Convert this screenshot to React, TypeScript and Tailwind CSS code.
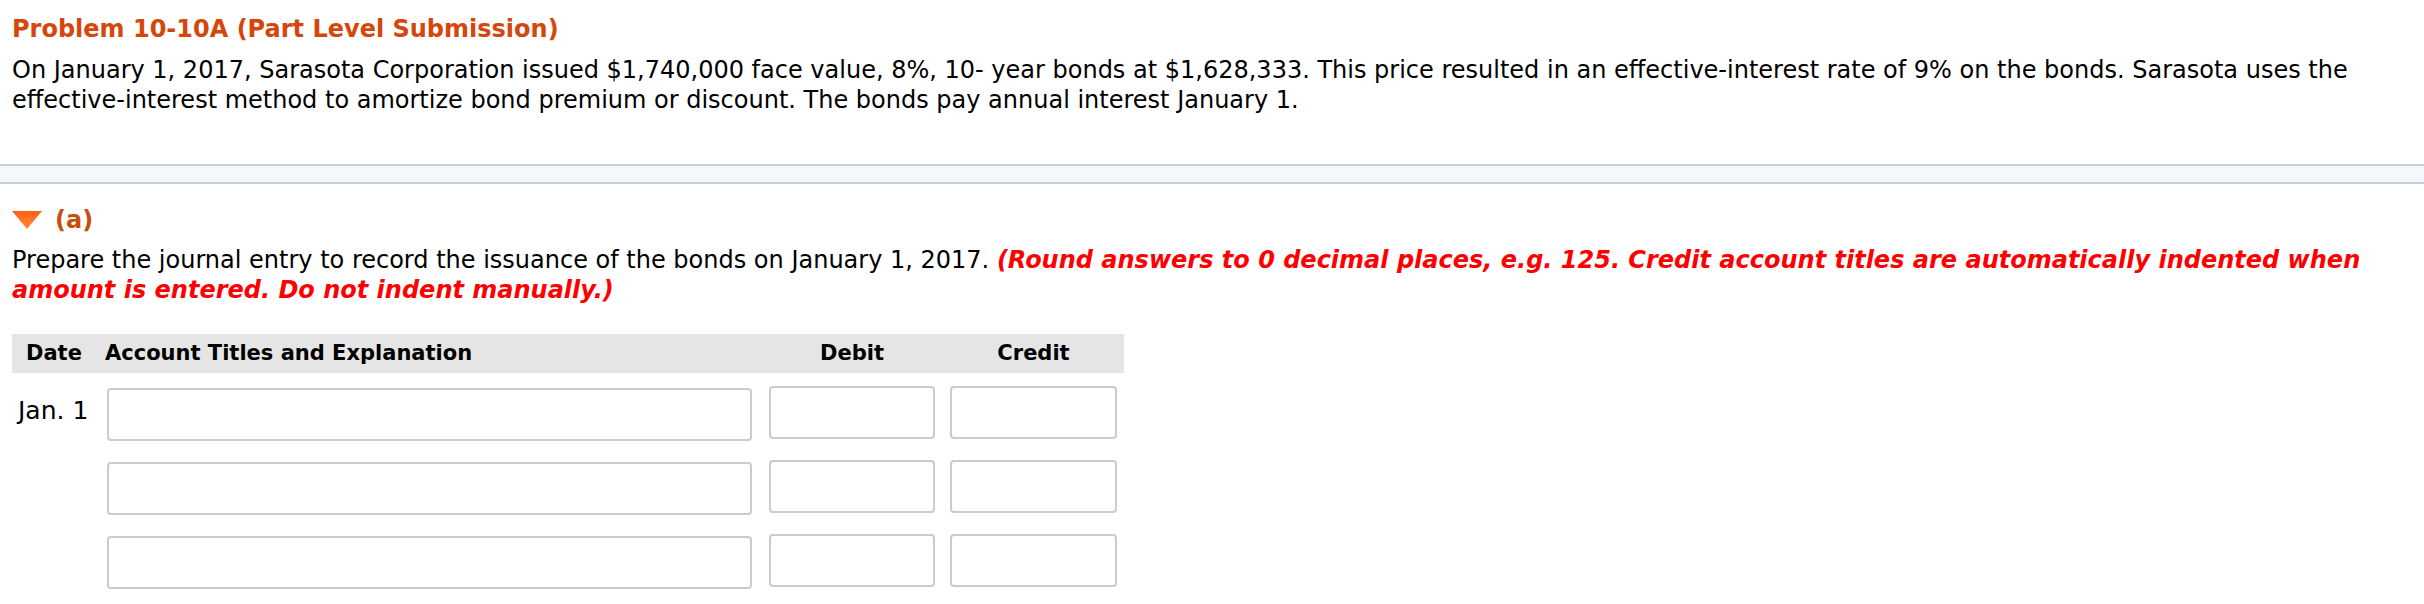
import React from "react";

// ---------------------------------------------------------------------------
// Journal entry problem page
// ---------------------------------------------------------------------------

const font = { fontFamily: "Verdana, 'DejaVu Sans', sans-serif" };

function Caret() {
  return (
    <svg width="30" height="18" viewBox="0 0 30 18" className="shrink-0">
      <defs>
        <linearGradient id="caretFill" x1="0" y1="0" x2="0" y2="1">
          <stop offset="0%" stopColor="#ff5f14" />
          <stop offset="100%" stopColor="#ff8a3a" />
        </linearGradient>
      </defs>
      <polygon points="0,0 30,0 15,18" fill="url(#caretFill)" />
    </svg>
  );
}

function Box({ className }: { className: string }) {
  return (
    <input
      type="text"
      className={`h-[53px] rounded-[4px] border-2 border-[#cbcbcb] bg-white outline-none ${className}`}
    />
  );
}

export default function App() {
  const rows = ["Jan. 1", "", ""];

  return (
    <div className="min-h-[604px] w-[2424px] bg-white text-[24px] text-black" style={font}>
      {/* Problem statement */}
      <div className="px-3 pt-[14px]">
        <h1 className="text-[24px] font-bold leading-[30px] text-[#d6460b]">
          Problem 10-10A (Part Level Submission)
        </h1>
        <p className="mt-[11px] leading-[30px]">
          On January 1, 2017, Sarasota Corporation issued $1,740,000 face value, 8%, 10- year bonds at
          $1,628,333. This price resulted in an effective-interest rate of 9% on the bonds. Sarasota uses
          the effective-interest method to amortize bond premium or discount. The bonds pay annual
          interest January 1.
        </p>
      </div>

      {/* Divider band */}
      <div className="mt-[49px] h-[20px] border-y-2 border-[#c8d0de] bg-[#f5f8fb]" />

      {/* Part (a) */}
      <div className="px-3">
        <div className="mt-[21px] flex items-center gap-[13px] leading-[30px]">
          <Caret />
          <span className="font-bold text-[#c84e10]">(a)</span>
        </div>
        <p className="mt-[10px] leading-[30px]">
          Prepare the journal entry to record the issuance of the bonds on January 1, 2017.{" "}
          <span className="font-bold italic text-[#ff0000]">
            (Round answers to 0 decimal places, e.g. 125. Credit account titles are automatically
            indented when amount is entered. Do not indent manually.)
          </span>
        </p>

        {/* Journal table */}
        <div className="mt-[29px] w-[1112px] text-[21px]">
          <div className="flex h-[39px] items-center bg-[#e5e5e5] font-bold">
            <div className="w-[93px] pl-[14px]">Date</div>
            <div className="w-[664px]">Account Titles and Explanation</div>
            <div className="w-[166px] text-center">Debit</div>
            <div className="ml-[15px] w-[167px] text-center">Credit</div>
          </div>

          <div className="flex flex-col gap-[19px] pt-[13px]">
            {rows.map((date, i) => (
              <div key={i} className="flex items-start">
                <div className="w-[95px] pl-[6px] pt-[10px] text-[25px] leading-[30px]">{date}</div>
                <Box className="mt-[2px] w-[645px]" />
                <Box className="ml-[17px] w-[166px]" />
                <Box className="ml-[15px] w-[167px]" />
              </div>
            ))}
          </div>
        </div>
      </div>
    </div>
  );
}
